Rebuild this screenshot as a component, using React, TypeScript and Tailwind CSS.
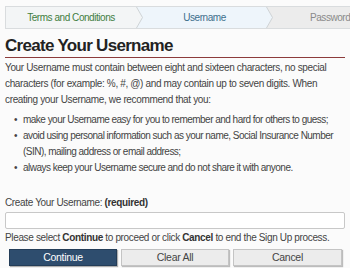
import React from "react";

function Chevron({ from, to }: { from: string; to: string }) {
  return (
    <svg width="7" height="21" viewBox="0 0 7 21" className="shrink-0 block" style={{ background: to }}>
      <polygon points="0,0 0.5,0 6.5,10.5 0.5,21 0,21" fill={from} />
      <polyline points="0.5,0 6.5,10.5 0.5,21" fill="none" stroke="#cfd3d6" strokeWidth="1" />
    </svg>
  );
}

export default function App() {
  return (
    <div
      className="w-[350px] h-[268px] overflow-hidden bg-[#fbfbfb] text-[#333]"
      style={{ fontFamily: '"Liberation Sans", Arial, sans-serif' }}
    >
      <div className="pt-[6px] pl-[5px]">
        <div className="flex w-[420px] h-[23px] border border-[#d9dcde] text-[10px] tracking-[-0.45px]">
          <div className="w-[130px] flex items-center justify-center bg-[#f3f5f6] text-[#3f7d3f]">
            Terms and Conditions
          </div>
          <Chevron from="#f3f5f6" to="#eef5fb" />
          <div className="w-[123px] flex items-center justify-center bg-[#eef5fb] text-[#3d6f8c]">
            Username
          </div>
          <Chevron from="#eef5fb" to="#ececec" />
          <div className="flex-1 flex items-center pl-[37px] bg-[#ececec] text-[#8a8a8a]">
            Password
          </div>
        </div>
      </div>

      <div className="px-[5px] text-[10px] tracking-[-0.35px]">
        <h1 className="mt-[7px] text-[17px] leading-[19px] font-bold text-[#222] tracking-[-0.7px] pb-[2px] border-b border-[#8c3b3b]">
          Create Your Username
        </h1>
        <p className="mt-[2px] leading-[16px] text-[#444]">
          Your Username must contain between eight and sixteen characters, no special characters (for example: %, #, @) and may contain up to seven digits. When creating your Username, we recommend that you:
        </p>
        <ul className="mt-[4px] leading-[16px] text-[#444] pl-[9px] tracking-[-0.52px]">
          <li className="flex">
            <span className="w-[9px] shrink-0">•</span>
            <span>make your Username easy for you to remember and hard for others to guess;</span>
          </li>
          <li className="flex">
            <span className="w-[9px] shrink-0">•</span>
            <span>avoid using personal information such as your name, Social Insurance Number (SIN), mailing address or email address;</span>
          </li>
          <li className="flex">
            <span className="w-[9px] shrink-0">•</span>
            <span>always keep your Username secure and do not share it with anyone.</span>
          </li>
        </ul>
        <div className="mt-[19px] leading-[16px] text-[#444]">
          Create Your Username: <b className="text-[#333]">(required)</b>
        </div>
        <div className="mt-[1px] h-[17px] w-[340px] bg-white border border-[#c8c8c8] rounded-[2px]" />
        <div className="mt-[1px] leading-[16px] text-[#444]">
          Please select <b className="text-[#333]">Continue</b> to proceed or click <b className="text-[#333]">Cancel</b> to end the Sign Up process.
        </div>
        <div className="mt-[3px] flex gap-[4px] pl-[4px] text-[10.5px] tracking-[-0.3px]">
          <button className="w-[108px] h-[17px] leading-[15px] bg-[#2e4d6e] text-white border border-[#243d58] shadow-[1px_1px_1px_rgba(0,0,0,0.3)]">
            Continue
          </button>
          <button className="w-[108px] h-[17px] leading-[15px] bg-[#ececec] text-[#444] border border-[#c4c4c4] shadow-[1px_1px_1px_rgba(0,0,0,0.25)]">
            Clear All
          </button>
          <button className="w-[109px] h-[17px] leading-[15px] bg-[#ececec] text-[#444] border border-[#c4c4c4] shadow-[1px_1px_1px_rgba(0,0,0,0.25)]">
            Cancel
          </button>
        </div>
      </div>
    </div>
  );
}
